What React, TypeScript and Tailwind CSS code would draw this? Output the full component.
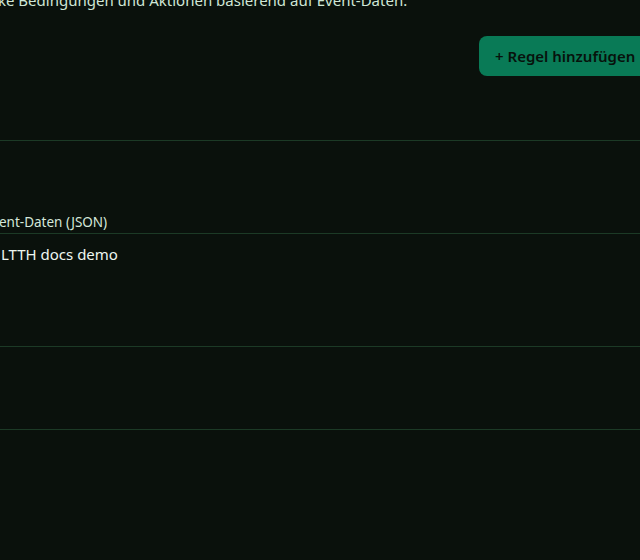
import React, { useState } from "react";

// Regel-Editor: Kopfzeile mit Button, danach Testbereich mit Event-Daten
export default function App() {
  const [eventData, setEventData] = useState("LTTH docs demo");

  return (
    <div
      className="w-[640px] h-[560px] overflow-hidden bg-[#0a110c] text-[#d4e8da]"
      style={{ fontFamily: '"Noto Sans", "Open Sans", sans-serif' }}
    >
      {/* Kopfbereich */}
      <header className="-mx-[20px] px-[20px] pb-[64px] border-b border-[#1c3a26]">
        <p className="-mt-[11px] -ml-[2px] text-[15px] leading-[22px] text-[#cfe6d6] whitespace-nowrap">
          ke Bedingungen und Aktionen basierend auf Event-Daten.
        </p>
        <div className="flex justify-end mt-[25px] -mr-[12px]">
          <button className="w-[173px] h-[40px] px-4 rounded-lg bg-[#097a56] text-[#07120c] text-[15px] font-semibold text-left whitespace-nowrap">
            + Regel hinzufügen
          </button>
        </div>
      </header>

      {/* Testbereich */}
      <section className="-mx-[20px] px-[20px] pt-[72px] pb-[82px] border-b border-[#1c3a26]">
        <label className="block -ml-[1px] text-[13.5px] leading-[18px] text-[#d4e8da] whitespace-nowrap">
          ent-Daten (JSON)
        </label>
        <textarea
          value={eventData}
          onChange={(e) => setEventData(e.target.value)}
          className="block mt-[2px] -mx-[40px] w-[720px] h-[114px] pl-[40px] pt-[8px] resize-none bg-transparent border border-[#1c3a26] text-[15px] leading-[24px] text-[#eef6f0] outline-none"
        />
      </section>
    </div>
  );
}
